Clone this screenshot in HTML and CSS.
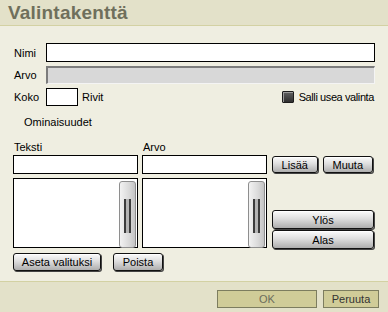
FILE: index.html
```html
<!DOCTYPE html>
<html lang="fi">
<head>
    <meta charset="UTF-8">
    <title>Valintakenttä</title>
    <link rel="stylesheet" href="styles.css">
</head>
<body>
    <div class="dialog">
        <div class="title-bar">
            <h1>Valintakenttä</h1>
        </div>

        <div class="content">
            <div class="row">
                <label class="lbl">Nimi</label>
                <input type="text" class="field wide">
            </div>
            <div class="row">
                <label class="lbl">Arvo</label>
                <input type="text" class="field wide disabled" disabled>
            </div>
            <div class="row size-row">
                <label class="lbl">Koko</label>
                <input type="text" class="field small">
                <span class="unit">Rivit</span>
                <span class="multi">
                    <span class="checkbox"></span>
                    <span class="multi-text">Salli usea valinta</span>
                </span>
            </div>

            <div class="section-title">Ominaisuudet</div>

            <div class="editor">
                <div class="col-label">Teksti</div>
                <div class="col-label">Arvo</div>
                <div></div>

                <input type="text" class="field">
                <input type="text" class="field">
                <div class="btn-pair">
                    <button class="btn">Lisää</button>
                    <button class="btn">Muuta</button>
                </div>

                <div class="listbox"><span class="thumb"></span></div>
                <div class="listbox"><span class="thumb"></span></div>
                <div class="btn-stack">
                    <button class="btn tall">Ylös</button>
                    <button class="btn tall">Alas</button>
                </div>
            </div>

            <div class="actions">
                <button class="btn">Aseta valituksi</button>
                <button class="btn poista">Poista</button>
            </div>
        </div>

        <div class="footer">
            <button class="footer-btn ok">OK</button>
            <button class="footer-btn cancel">Peruuta</button>
        </div>
    </div>
</body>
</html>
```

FILE: styles.css
```css
body {
    margin: 0;
    padding: 0;
    font-family: "Liberation Sans", Arial, sans-serif;
    font-size: 11px;
    color: #000;
    background-color: #efeee1;
}

.dialog {
    width: 388px;
    height: 312px;
    display: flex;
    flex-direction: column;
    background-color: #efeee1;
}

.title-bar {
    height: 25px;
    background-color: #e3e1c9;
    border-bottom: 1px solid #d3d1a3;
    display: flex;
    align-items: center;
}

.title-bar h1 {
    margin: 0 0 0 8px;
    font-size: 19px;
    font-weight: bold;
    color: #6f6f5c;
    letter-spacing: 0.2px;
}

.content {
    flex: 1;
    padding: 17px 13px 0 13px;
}

.row {
    display: flex;
    align-items: center;
    margin-bottom: 4px;
}

.lbl {
    width: 32px;
    padding-left: 1px;
}

.field {
    box-sizing: border-box;
    height: 19px;
    margin: 0;
    border: 1px solid #000;
    background-color: #fff;
    padding: 0 2px;
    font: inherit;
}

.field.wide {
    width: 330px;
}

.field.disabled {
    height: 18px;
    background-color: #d8d8d8;
    border-width: 2px 1px 1px 2px;
    border-style: solid;
    border-color: #7c7c7c #f4f4f4 #f4f4f4 #7c7c7c;
}

.size-row {
    margin-top: 2px;
}

.field.small {
    width: 32px;
    height: 18px;
}

.unit {
    margin-left: 4px;
}

.multi {
    margin-left: auto;
    display: flex;
    align-items: center;
    gap: 5px;
    padding-right: 1px;
}

.multi-text {
    letter-spacing: -0.4px;
}

.checkbox {
    box-sizing: border-box;
    width: 12px;
    height: 12px;
    border: 1px solid #1c1c1c;
    border-radius: 1px;
    background: linear-gradient(#616161, #2e2e2e);
    box-shadow: inset 1px 1px 0 #9a9a9a;
}

.section-title {
    margin: 10px 0 0 11px;
    height: 13px;
    line-height: 13px;
}

.editor {
    display: grid;
    grid-template-columns: 125px 125px 102px;
    grid-template-rows: 13px 19px 70px;
    column-gap: 4px;
    row-gap: 4px;
    margin-top: 9px;
}

.editor > :nth-child(3n) {
    margin-left: 1px;
}

.col-label {
    line-height: 13px;
    padding-left: 1px;
    align-self: end;
}

.editor .col-label,
.editor > div:nth-child(3) {
    margin-bottom: -3px;
}

.btn {
    box-sizing: border-box;
    height: 17px;
    padding: 0 6px;
    margin: 0;
    border: 1px solid #111;
    border-radius: 3px;
    background: linear-gradient(#fbfbfb 0%, #dedede 45%, #aeaeae 100%);
    box-shadow: inset 0 1px 0 #fff, 1px 1px 0 #444;
    font: inherit;
    color: #000;
    cursor: pointer;
}

.btn-pair {
    display: flex;
    gap: 5px;
    align-items: center;
}

.btn-pair .btn {
    width: 46px;
}

.btn-pair .btn + .btn {
    width: 51px;
}

.btn-stack {
    display: flex;
    flex-direction: column;
    justify-content: flex-end;
    gap: 1px;
    margin-bottom: -1px;
}

.btn.tall {
    width: 102px;
    height: 19px;
}

.listbox {
    box-sizing: border-box;
    border: 1px solid #000;
    background-color: #fff;
    display: flex;
    justify-content: flex-end;
    padding: 1px 1px 0 0;
}

.thumb {
    box-sizing: border-box;
    width: 17px;
    height: 67px;
    margin-top: 1px;
    border: 1px solid #8e8e8e;
    border-radius: 3px;
    background: linear-gradient(90deg, #f2f2f2, #dadada 60%, #c4c4c4);
    display: flex;
    align-items: center;
    justify-content: center;
}

.thumb::before {
    content: "";
    width: 3px;
    height: 34px;
    margin-top: 2px;
    border-left: 2px solid #3c3c3c;
    border-right: 2px solid #3c3c3c;
    background-color: #b4b4b4;
}

.actions {
    display: flex;
    gap: 12px;
    margin-top: 5px;
}

.actions .btn {
    height: 18px;
    width: 88px;
}

.actions .btn.poista {
    width: 50px;
}

.footer {
    height: 31px;
    border-top: 1px solid #d3d1a3;
    background-color: #e3e1c9;
    display: flex;
    justify-content: flex-end;
    align-items: flex-start;
    gap: 6px;
    padding: 8px 9px 0 0;
    box-sizing: border-box;
}

.footer-btn {
    box-sizing: border-box;
    height: 18px;
    margin: 0;
    padding: 0;
    border: 1px solid #7d7d5f;
    background-color: #d0cc98;
    font: inherit;
    cursor: pointer;
}

.footer-btn.ok {
    width: 100px;
    color: #6c6c5c;
}

.footer-btn.cancel {
    width: 56px;
    color: #333;
}
```
